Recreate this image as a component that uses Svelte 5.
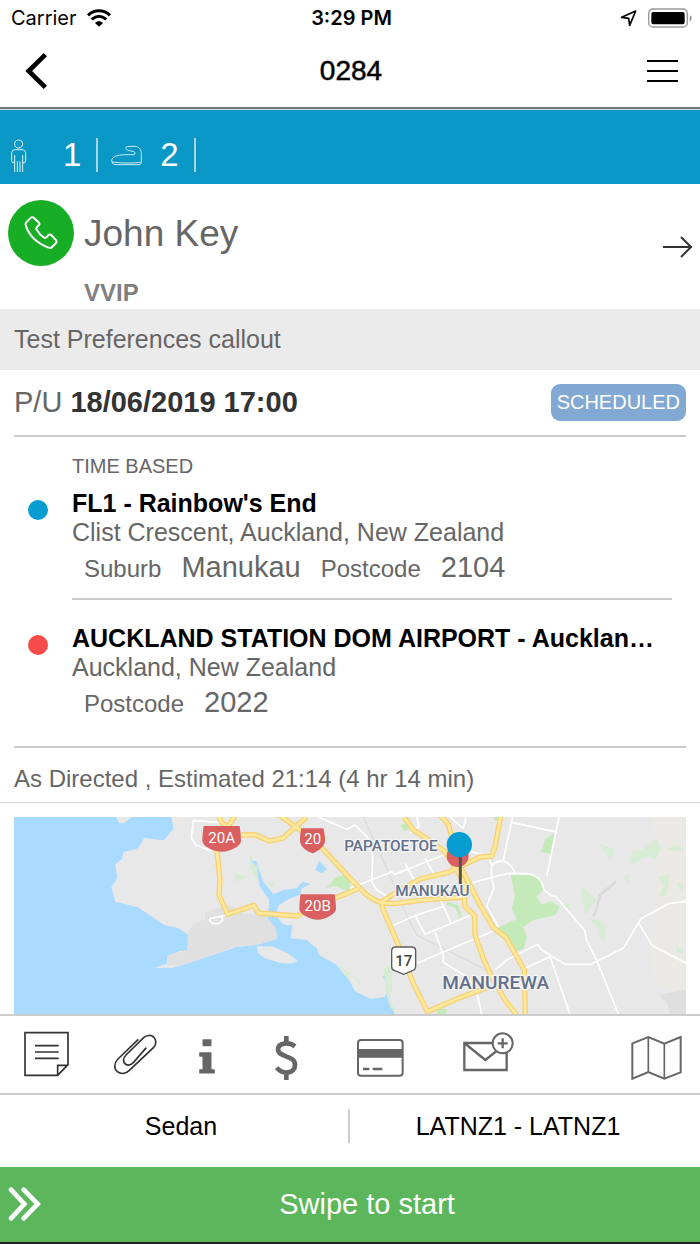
<script lang="ts">
  interface Stop {
    label?: string;
    title: string;
    address: string;
    color: string;
    details: { name: string; value: string }[];
  }

  const stops: Stop[] = [
    {
      label: "TIME BASED",
      title: "FL1 - Rainbow's End",
      address: "Clist Crescent, Auckland, New Zealand",
      color: "#079dd0",
      details: [
        { name: "Suburb", value: "Manukau" },
        { name: "Postcode", value: "2104" },
      ],
    },
    {
      title: "AUCKLAND STATION DOM AIRPORT - Aucklan…",
      address: "Auckland, New Zealand",
      color: "#f84b4b",
      details: [{ name: "Postcode", value: "2022" }],
    },
  ];

  const highways = [
    "M655 240L665 262L684 276L706 240",
    "M650 340L660 435L657 480L683 538L762 511L775 534L892 543L925 520L1050 472L1075 460",
    "M722 300L765 299L808 318L848 310L920 246",
    "M838 240L900 285L965 338L1050 430L1095 475C1125 500 1150 508 1190 505L1280 494L1390 486",
    "M1145 500L1180 478L1260 432L1345 412L1390 390L1440 366L1475 364L1485 335L1503 240",
    "M1212 246L1240 285L1290 318L1335 350L1370 405L1390 440L1395 515L1424 542L1425 600L1450 670L1472 720L1515 795L1550 840",
    "M1320 240L1345 268L1362 330L1378 390L1410 450L1440 510L1480 578L1518 608L1573 705L1576 840",
    "M1145 500L1148 520L1195 630L1240 745L1282 830L1375 790L1460 758",
  ];

  const streets = [
    "M580 256L574 310L588 330L632 347M578 256L655 262",
    "M955 246L1040 283L1065 270L1115 320L1118 375M1118 375L1115 440L1130 465L1165 485",
    "M1250 240L1257 275L1230 295M1350 246L1390 280L1398 246",
    "M1050 460L1165 415L1175 410L1185 418L1330 360M1215 385L1245 440M1275 370L1310 430",
    "M1400 345L1465 365L1475 390L1475 430L1482 458L1460 512L1495 575",
    "M1390 450L1520 416L1580 416C1610 420 1625 430 1632 465L1655 483L1667 484L1755 588L1758 612L1792 680L1855 837",
    "M1538 246L1534 262L1510 375M1534 262L1665 290M1677 246L1640 424",
    "M1475 390C1500 370 1530 375 1545 415",
    "M1170 575L1250 540L1330 515M1245 540L1275 598L1415 540M1320 490L1352 562",
    "M1250 685L1495 582M1305 590L1330 660L1330 682L1400 725L1430 770L1445 837",
    "M1485 705L1520 675L1613 628L1625 645L1695 688L1772 688L1870 640L1922 552L2005 506L2058 499",
    "M1570 703L1650 665L1710 837M1915 563L1957 632L2058 684",
  ];
</script>

<main class="screen">
  <div class="status">
    <span class="carrier">
      Carrier
      <svg width="24" height="18" viewBox="0 0 72 54" aria-hidden="true">
        <g fill="none" stroke="#000" stroke-width="9">
          <path d="M3 19C22 1 50 1 69 19" />
          <path d="M14 31C28 19 44 19 58 31" />
        </g>
        <path d="M24 42C31 35 41 35 48 42L36 53Z" />
      </svg>
    </span>
    <time class="clock">3:29 PM</time>
    <span class="power">
      <svg width="18" height="18" viewBox="0 0 54 54" aria-hidden="true">
        <path d="M5 25L47 6L29 49L26 28Z" fill="none" stroke="#000" stroke-width="5" stroke-linejoin="round" />
      </svg>
      <svg width="44" height="20" viewBox="0 0 132 60" aria-hidden="true">
        <rect x="2" y="3" width="116" height="54" rx="13" fill="none" stroke="#999" stroke-width="4" />
        <rect x="10" y="12" width="100" height="37" rx="6" />
        <path d="M125 21Q131 24 131 31T125 41Z" fill="#999" />
      </svg>
    </span>
  </div>

  <header class="nav">
    <button aria-label="Back">
      <svg width="24" height="36" viewBox="0 0 72 108">
        <path d="M64 5L14 54L64 103" fill="none" stroke="#000" stroke-width="14" />
      </svg>
    </button>
    <h1>0284</h1>
    <button class="menu" aria-label="Menu">
      <svg width="31" height="26" viewBox="0 0 31 26">
        <path d="M0 3H31M0 13H31M0 23H31" stroke="#000" stroke-width="2" />
      </svg>
    </button>
  </header>

  <div class="counts">
    <span class="count people">
      <svg width="16" height="34" viewBox="0 0 48 102" fill="none" stroke="#e2f3f9" stroke-width="3" aria-label="Passengers">
        <circle cx="23" cy="18" r="12" />
        <path d="M11 102V51M35 102V51M19 102V70M27 102V70M11 74H7Q2 74 2 68V44Q3 36 11 35H35Q43 36 44 44V68Q44 74 39 74H35" />
      </svg>
      1
    </span>
    <span class="count">
      <svg width="31" height="34" viewBox="0 0 93 102" fill="none" stroke="#cfeaf4" stroke-width="3" aria-label="Bags">
        <path d="M2 68C4 55 20 51 40 50H69C78 44 68 39 55 38C40 34 41 25 54 25H72C85 26 91 35 91 47V73Q90 80 84 80H12Q3 80 2 68ZM3 72Q30 76 60 75T91 71" />
      </svg>
      2
    </span>
  </div>

  <section class="customer">
    <button class="call" aria-label="Call John Key">
      <svg width="36" height="36" viewBox="0 0 108 108">
        <path
          d="M9 23L24 8Q28 5 32 8L49 24Q51 27 48 30L41 37Q38 40 41 44C47 55 54 62 65 69Q68 70 71 66L77 60Q81 57 85 60L100 77Q102 81 99 84L85 98Q82 100 77 98C42 84 17 63 8 29Q7 26 9 23Z"
          fill="none"
          stroke="#fff"
          stroke-width="6"
        />
      </svg>
    </button>
    <div class="person">
      <h2>John Key</h2>
      <p>VVIP</p>
    </div>
    <button class="next" aria-label="Customer details">
      <svg width="30" height="24" viewBox="0 0 30 24">
        <path d="M0 12H29M18 2L28 12L18 22" fill="none" stroke="#333" stroke-width="2" />
      </svg>
    </button>
  </section>

  <p class="callout">Test Preferences callout</p>

  <section class="job">
    <div class="pickup">
      <span>P/U <strong>18/06/2019 17:00</strong></span>
      <span class="badge">SCHEDULED</span>
    </div>
    <div class="stops">
      {#each stops as stop}
        <article class="stop">
          {#if stop.label}
            <p class="label">{stop.label}</p>
          {/if}
          <span class="dot" style="background: {stop.color}"></span>
          <div class="place">
            <h3>{stop.title}</h3>
            <p class="address">{stop.address}</p>
            <p class="details">
              {#each stop.details as detail}
                <span>{detail.name}</span>
                <b>{detail.value}</b>
              {/each}
            </p>
          </div>
        </article>
      {/each}
    </div>
    <p class="estimate">As Directed , Estimated 21:14 (4 hr 14 min)</p>
  </section>

  <div class="map">
    <svg viewBox="42 246 2016 591" role="img" aria-label="Map of Manukau">
      <rect x="42" y="246" width="2016" height="591" fill="#a9daff" />

      <!-- land -->
      <g fill="#e8e8e8">
        <path d="M348 246L358 265L372 265L396 246Z" />
        <path
          d="M515 246L521 280L492 316L432 309L414 340L370 352L366 372L346 388L352 430L334 456L346 500L414 517L492 570L536 580L565 600L562 645L540 648L502 662L500 686L465 698L515 699L540 693L710 636L770 630L830 612L830 575L876 570L873 610L920 615L950 640L958 660L1010 690L1050 740L1065 768L1110 792L1155 786L1165 755L1148 725L1168 715L1172 760L1165 800L1185 837H2058V246Z"
        />
        <path d="M770 634H815C845 645 880 662 892 678Q880 690 840 683L795 670L775 655Z" />
      </g>
      <path d="M515 246L521 278L560 246Z" fill="#ebe9e2" />
      <path d="M615 530L690 510L720 535L808 540L830 580L828 612L770 630L700 636L540 693L502 690L502 662L562 645L565 590L580 568L615 552Z" fill="#e0e0e0" />
      <path d="M1955 246L1965 330L1972 420L1955 650L1962 740L2015 770L2058 765V246Z" fill="#ebe9e4" />
      <path d="M2058 765L1975 780L2000 800L2010 837H2058Z" fill="#dedede" />

      <!-- inlets -->
      <g fill="#a9daff">
        <path d="M748 378L768 378L790 440L820 478L850 465L890 460L908 440L932 448L905 460L900 480L870 490L835 512L828 540L845 565L880 578L830 600L828 580L803 550L808 495L780 455L770 400Z" />
        <path d="M958 378L980 402L966 415L946 404Z" />
      </g>

      <!-- parks -->
      <g fill="#c5eab9">
        <path d="M1532 420L1610 420L1628 440L1630 465L1608 485L1624 508L1655 500L1680 516L1665 540L1600 555L1570 575L1580 605L1572 640L1550 650L1518 600L1495 578L1550 552L1535 520L1545 480Z" />
        <path d="M1664 294L1652 357L1622 350L1636 312Z" />
        <path d="M978 460L1010 425L1050 417V470L1000 452ZM1200 270L1225 262L1232 275L1215 290Z" />
        <path d="M1310 820L1340 822V837H1310ZM1480 246H1495L1488 260Z" />
      </g>
      <g fill="#d6ecd4">
        <path d="M748 365L757 362L755 380L772 395V432L756 412ZM706 413L735 422L752 440L742 430L707 440ZM798 440L822 442L815 458Z" />
        <path d="M970 306L991 302L976 322ZM1798 326L1846 344L1828 372ZM1886 390L1895 352L1925 345L1972 312L1983 340L1965 375L1945 365Z" />
        <path d="M2000 340L2035 330L2050 345L2020 350ZM1970 425L2010 420L2000 480L1978 485L1990 450ZM1870 425L1888 418L1885 445ZM1745 455L1790 495L1775 510L1757 538L1742 475Z" />
        <path d="M1762 550L1812 560L1818 612L1800 615L1798 580ZM2028 440L2052 455L2045 468ZM2028 625L2050 655L2030 650ZM1680 510L1705 505L1712 525Z" />
        <path d="M1015 690L1050 715V740ZM1050 715L1078 735L1085 755ZM1150 700L1175 695L1178 760L1165 790L1188 830L1172 820L1160 780Z" />
      </g>
      <path d="M1340 505L1370 515L1382 545" fill="none" stroke="#c5eab9" stroke-width="10" />
      <path d="M1848 440L1800 480L1790 520L1780 545" fill="none" stroke="#dadada" stroke-width="8" />
      <path d="M1090 246L1160 400L1220 540L1250 600L1480 715" fill="none" stroke="#dcdcdc" stroke-width="4" />

      <g fill="none" stroke="#fff" stroke-width="5" stroke-linejoin="round">
        {#each streets as d}
          <path {d} />
        {/each}
        <path d="M682 540L632 550Q622 556 640 566H655L668 556L665 545" />
      </g>
      <g fill="none" stroke="#f5cf70" stroke-width="16" stroke-linejoin="round">
        {#each highways as d}
          <path {d} />
        {/each}
      </g>
      <g fill="none" stroke="#ffe89b" stroke-width="9" stroke-linejoin="round">
        {#each highways as d}
          <path {d} />
        {/each}
      </g>

      <!-- route shields -->
      <g fill="#d95f60">
        <path d="M611 273H719C721 290 723 305 723 318C722 334 690 350 665 350S608 334 607 318C607 305 609 290 611 273Z" />
        <path d="M904 280H970Q977 306 974 324C967 341 950 350 938 355C922 349 907 341 901 324Q898 305 904 280Z" />
        <path d="M901 478H1004C1006 495 1008 508 1008 522C1006 538 975 554 953 554S899 538 898 522C898 508 900 495 901 478Z" />
        <circle cx="1373" cy="363" r="33" />
      </g>
      <path d="M1186 636H1236Q1247 637 1247 648V695Q1246 704 1238 707L1211 718L1184 707Q1175 704 1175 695V648Q1175 637 1186 636Z" fill="#fff" stroke="#5c5c5c" stroke-width="4" />
      <g class="route">
        <text x="665" y="323">20A</text>
        <text x="938" y="328">20</text>
        <text x="953" y="528">20B</text>
        <text class="dark" x="1211" y="692">17</text>
      </g>

      <g class="suburb">
        <text x="1173" y="347" font-size="46">PAPATOETOE</text>
        <text x="1297" y="484" font-size="46">MANUKAU</text>
        <text x="1487" y="761" font-size="57">MANUREWA</text>
      </g>

      <path d="M1381 350V447" stroke="#555" stroke-width="9" />
      <circle cx="1378" cy="329" r="38" fill="#079dd0" />
    </svg>
  </div>

  <div class="tools">
    <button aria-label="Notes">
      <svg width="46" height="50" viewBox="0 0 138 150" fill="none" stroke="#333" stroke-width="5">
        <path d="M3 5H132V101L101 133H3ZM101 133V103H132M33 44H104M33 63H104M33 82H104" />
      </svg>
    </button>
    <button aria-label="Attachments">
      <svg width="48" height="50" viewBox="0 0 144 150" fill="none" stroke="#333" stroke-width="5">
        <path
          d="M85 25L24 84C11 97 12 114 22 122C34 131 48 128 58 118L131 49C140 39 139 26 131 18C123 11 110 12 101 20L48 72C38 82 39 93 46 99C53 104 63 102 70 95L109 50"
        />
      </svg>
    </button>
    <button class="wide" aria-label="Information">
      <svg width="18" height="50" viewBox="0 0 54 150" fill="#666" stroke="#666" stroke-width="5" stroke-linejoin="round">
        <path d="M16 27H38V43H16ZM6 66H38V117H48V125H6V117H16V75H6Z" />
      </svg>
    </button>
    <button class="wide" aria-label="Price">
      <svg width="23" height="50" viewBox="0 0 69 150" fill="none" stroke="#666" stroke-width="14">
        <path d="M60 46C42 32 9 35 9 55C9 80 60 72 60 101C60 129 24 132 5 110M34 15V34M34 126V147" />
      </svg>
    </button>
    <button class="wide" aria-label="Payment">
      <svg width="47" height="50" viewBox="0 0 141 150" fill="none" stroke="#666" stroke-width="6">
        <rect x="3" y="27" width="134" height="107" rx="9" />
        <path d="M3 67H137" stroke-width="26" />
        <path d="M18 114H37M47 114H76" stroke-width="8" />
      </svg>
    </button>
    <button aria-label="New message">
      <svg width="51" height="50" viewBox="0 0 153 150" fill="none" stroke="#666" stroke-width="7">
        <path d="M4 36H131V117H4ZM4 36L67 87L131 36" />
        <circle cx="119" cy="37" r="30" fill="#fff" stroke-width="6" />
        <path d="M104 37H134M119 22V52" />
      </svg>
    </button>
    <button class="last" aria-label="Map">
      <svg width="51" height="50" viewBox="0 0 153 150" fill="none" stroke="#666" stroke-width="6">
        <path d="M4 37L52 18L100 38L149 18V124L100 143L52 123L4 143Z" />
        <path d="M52 18V123M100 38V143" stroke-width="5" />
      </svg>
    </button>
  </div>

  <div class="vehicle">
    <span>Sedan</span>
    <span>LATNZ1 - LATNZ1</span>
  </div>

  <button class="swipe">
    <svg width="34" height="34" viewBox="0 0 102 102" aria-hidden="true">
      <path d="M9 8L49 51L9 94M47 8L89 51L47 94" fill="none" stroke="#fff" stroke-width="14" stroke-linecap="round" />
    </svg>
    <span>Swipe to start</span>
  </button>
</main>

<style>
  :global(body) {
    margin: 0;
    background: #fff;
  }

  .screen {
    font-family: "Liberation Sans", Arial, sans-serif;
    font-size: 25px;
    line-height: 29px;
    color: #666;
  }

  h1,
  h2,
  h3,
  p {
    margin: 0;
    font-weight: normal;
  }

  button {
    padding: 0;
    border: 0;
    background: none;
    color: inherit;
    font: inherit;
    cursor: pointer;
  }

  svg {
    display: block;
    flex: none;
  }

  .status {
    display: grid;
    grid-template-columns: 1fr auto 1fr;
    align-items: center;
    padding: 0 8px 0 11px;
    font-family: Inter, sans-serif;
    font-size: 20px;
    line-height: 36px;
    color: #000;
  }

  .carrier,
  .power {
    display: flex;
    align-items: center;
    gap: 10px;
  }

  .power {
    justify-content: flex-end;
  }

  .clock {
    font-weight: 600;
  }

  .nav {
    display: grid;
    grid-template-columns: 1fr auto 1fr;
    align-items: center;
    padding: 17px 22px 18px 24px;
    border-bottom: 2px solid #777;
  }

  .nav h1 {
    font-size: 28px;
    line-height: 36px;
    color: #000;
    -webkit-text-stroke: 1px #0008;
  }

  .menu {
    justify-self: end;
  }

  .counts {
    display: flex;
    padding: 28px 0 12px;
    border-top: 1px solid #c5dfe8;
    background: #0997c5;
    color: #fff;
    font-size: 33px;
    line-height: 34px;
  }

  .count {
    display: flex;
    gap: 18px;
    padding: 0 15px 0 13px;
    border-right: 2px solid #a9d3e2;
  }

  .people {
    gap: 36px;
    padding-left: 11px;
  }

  .customer {
    display: flex;
    align-items: center;
    gap: 10px;
    padding: 0 7px 0 8px;
  }

  .call {
    display: grid;
    place-items: center;
    align-self: flex-start;
    width: 66px;
    height: 66px;
    margin-top: 16px;
    border-radius: 50%;
    background: #17ae25;
  }

  .person {
    flex: 1;
    padding: 27px 0 2px;
  }

  .person h2 {
    font-size: 37px;
    line-height: 46px;
  }

  .person p {
    margin-top: 22px;
    font-size: 24px;
    line-height: 28px;
    font-weight: bold;
    color: #808080;
  }

  .callout {
    padding: 16px 14px;
    background: #ebebeb;
  }

  .job {
    border-bottom: 1px solid #d6d6d6;
  }

  .pickup {
    display: flex;
    align-items: center;
    justify-content: space-between;
    margin: 0 14px;
    padding: 14px 0;
    border-bottom: 2px solid #ccc;
    font-size: 29px;
  }

  .pickup strong {
    color: #333;
  }

  .badge {
    padding: 0 6px;
    border-radius: 9px;
    background: #82a9d3;
    color: #fff;
    font-size: 20px;
    line-height: 37px;
  }

  .stops {
    margin: 0 14px;
    border-bottom: 2px solid #ccc;
  }

  .stop {
    display: grid;
    grid-template-columns: 58px minmax(0, 1fr);
    padding: 17px 14px 0 0;
  }

  .label {
    grid-column: 2;
    margin-bottom: 11px;
    font-size: 20px;
    line-height: 24px;
  }

  .dot {
    width: 20px;
    height: 20px;
    margin: 11px 0 0 14px;
    border-radius: 50%;
  }

  .place {
    padding-bottom: 9px;
    border-bottom: 2px solid #ccc;
  }

  .stop:last-child {
    padding-top: 24px;
  }

  .stop:last-child .place {
    padding-bottom: 22px;
    border-bottom: 0;
  }

  .place h3 {
    overflow: hidden;
    color: #000;
    font-size: 25px;
    font-weight: bold;
    text-overflow: ellipsis;
    white-space: nowrap;
  }

  .details {
    display: flex;
    align-items: baseline;
    gap: 20px;
    padding-left: 12px;
    font-size: 24px;
    line-height: 40px;
  }

  .details b {
    font-size: 29px;
    font-weight: normal;
  }

  .estimate {
    padding: 16px 14px 9px;
    font-size: 24px;
  }

  .map {
    padding: 14px 14px 0;
    border-bottom: 2px solid #ccc;
  }

  .map svg {
    width: 100%;
    height: auto;
  }

  .route {
    fill: #fff;
    font-family: Roboto, sans-serif;
    font-size: 45px;
    text-anchor: middle;
  }

  .route .dark {
    fill: #444;
    font-weight: 500;
  }

  .suburb {
    fill: #62708a;
    stroke: #f4f4f4;
    stroke-width: 8px;
    paint-order: stroke;
    font-family: Roboto, sans-serif;
    font-weight: 500;
    text-anchor: middle;
  }

  .tools {
    display: flex;
    gap: 40px;
    padding: 15px 18px 12px 24px;
    border-bottom: 2px solid #ccc;
  }

  .wide {
    padding-right: 19px;
  }

  .last {
    margin-left: auto;
  }

  .vehicle {
    display: grid;
    grid-template-columns: 1fr 1fr;
    padding: 14px 14px 24px;
    color: #000;
    line-height: 34px;
    text-align: center;
  }

  .vehicle span:first-child {
    border-right: 2px solid #ccc;
  }

  .swipe {
    display: flex;
    align-items: center;
    width: 100%;
    padding: 20px 8px 21px;
    border-bottom: 2px solid #222;
    background: #5cb65c;
    color: #fff;
    font-size: 29px;
    line-height: 34px;
  }

  .swipe span {
    flex: 1;
  }
</style>
